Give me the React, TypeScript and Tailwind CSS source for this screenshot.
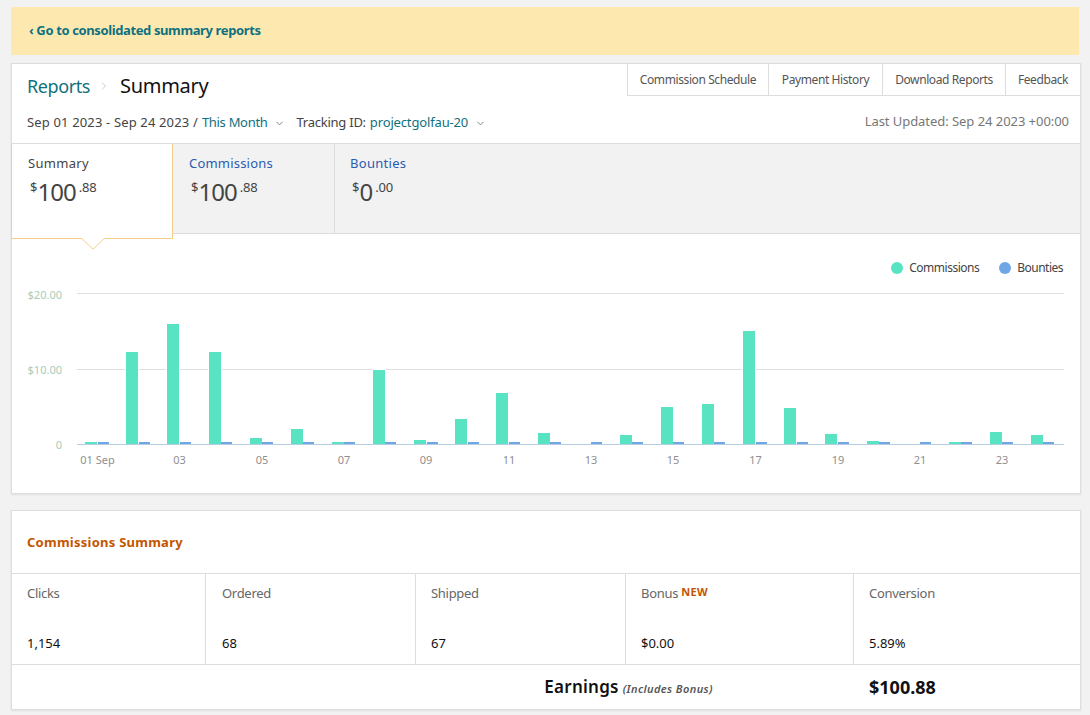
import { ChevronDown, ChevronRight } from 'lucide-react';

const commissionBars = [
  { x: 85, top: 442 },
  { x: 126, top: 352 },
  { x: 167, top: 324 },
  { x: 209, top: 352 },
  { x: 250, top: 438 },
  { x: 291, top: 429 },
  { x: 332, top: 442 },
  { x: 373, top: 370 },
  { x: 414, top: 440 },
  { x: 455, top: 419 },
  { x: 496, top: 393 },
  { x: 538, top: 433 },
  { x: 620, top: 435 },
  { x: 661, top: 407 },
  { x: 702, top: 404 },
  { x: 743, top: 331 },
  { x: 784, top: 408 },
  { x: 825, top: 434 },
  { x: 867, top: 441 },
  { x: 949, top: 442 },
  { x: 990, top: 432 },
  { x: 1031, top: 435 },
];

const bountyBars = [98, 139, 180, 221, 262, 303, 344, 385, 427, 468, 509, 550, 591, 632, 673, 714, 756, 797, 838, 879, 920, 961, 1002, 1043];

const xLabels = [
  { x: 97.5, label: '01 Sep' },
  { x: 179.5, label: '03' },
  { x: 262, label: '05' },
  { x: 344, label: '07' },
  { x: 426, label: '09' },
  { x: 509, label: '11' },
  { x: 591, label: '13' },
  { x: 673, label: '15' },
  { x: 755.5, label: '17' },
  { x: 838, label: '19' },
  { x: 920, label: '21' },
  { x: 1002, label: '23' },
];

function Money({ whole, cents }: { whole: string; cents: string }) {
  return (
    <div className="flex items-start text-[#444] leading-none ml-[2px] pt-[3px]">
      <span className="text-[13px] mt-[2px]">$</span>
      <span className="text-[24px] mt-[1px] tracking-[-1px]">{whole}</span>
      <span className="text-[13px] mt-[2px] ml-[3px] tracking-[-0.2px]">.{cents}</span>
    </div>
  );
}

function Chart() {
  return (
    <svg viewBox="12 285 1068 208" className="block w-[1068px] h-[208px]">
      <line x1="77" x2="1064" y1="293.5" y2="293.5" stroke="#dfdfdf" />
      <line x1="77" x2="1064" y1="369.5" y2="369.5" stroke="#dfdfdf" />
      <text x="62" y="299" textAnchor="end" fontSize="11" fill="#a8cdb8">$20.00</text>
      <text x="62" y="374" textAnchor="end" fontSize="11" fill="#a8cdb8">$10.00</text>
      <text x="62" y="449" textAnchor="end" fontSize="11" fill="#a8cdb8">0</text>
      {commissionBars.map((b) => (
        <g key={b.x}>
          <rect x={b.x - 1} y={b.top - 1} width="14" height={445 - b.top} fill="#fff" />
          <rect x={b.x} y={b.top} width="12" height={444 - b.top} fill="#58e4c2" />
        </g>
      ))}
      {bountyBars.map((x) => (
        <rect key={x} x={x} y="442" width="11" height="2" fill="#6fa6e6" />
      ))}
      <line x1="77" x2="1064" y1="444.5" y2="444.5" stroke="#b7cde3" />
      {xLabels.map((l) => (
        <text key={l.label} x={l.x} y="464" textAnchor="middle" fontSize="11" fill="#8f8f8f">{l.label}</text>
      ))}
    </svg>
  );
}

function StatCell({ label, value, width, last }: { label: React.ReactNode; value: string; width: string; last?: boolean }) {
  return (
    <div className={`${width} ${last ? '' : 'border-r border-[#ddd]'} pt-[10px] h-[90px] flex flex-col justify-between pb-[12px]`}>
      <div className="text-[13px] leading-[18px] text-[#666] tracking-[-0.3px]">{label}</div>
      <div className="text-[13px] leading-[18px] text-[#111]">{value}</div>
    </div>
  );
}

export default function App() {
  return (
    <div className="min-h-screen bg-[#f2f2f2] pt-[7px] px-[11px] font-['Noto_Sans',sans-serif]">
      <div className="h-[48px] bg-[#fde9b0] flex items-center pl-[18px] text-[13px] font-bold text-[#0f7180] tracking-[-0.38px]">
        ‹ Go to consolidated summary reports
      </div>

      <div className="mt-[8px] w-[1070px] h-[431px] bg-white border border-[#ddd] shadow-[0_1px_2px_rgba(0,0,0,0.08)]">
        <div className="h-[79px] relative">
          <div className="flex items-start justify-between">
            <div className="flex items-center pl-[15px] pt-[7px] leading-[30px]">
              <span className="text-[18px] text-[#0f7180] tracking-[-0.4px]">Reports</span>
              <ChevronRight className="w-[12px] h-[12px] text-[#ccc] ml-[8px] mr-[10px]" />
              <span className="text-[20px] text-[#111] tracking-[-0.3px]">Summary</span>
            </div>
            <div className="flex h-[32px] text-[12px] text-[#555] tracking-[-0.4px]">
              <div className="w-[141px] border-l border-b border-[#ddd] flex items-center justify-center">Commission Schedule</div>
              <div className="w-[114px] border-l border-b border-[#ddd] flex items-center justify-center">Payment History</div>
              <div className="w-[123px] border-l border-b border-[#ddd] flex items-center justify-center">Download Reports</div>
              <div className="w-[75px] border-l border-b border-[#ddd] flex items-center justify-center">Feedback</div>
            </div>
          </div>
          <div className="flex items-center justify-between pl-[15px] pr-[11px] mt-[11px] text-[13px] leading-[18px]">
            <div className="flex items-center text-[#444]">
              <span className="tracking-[0.15px]">Sep 01 2023 - Sep 24 2023 /</span>
              <span className="text-[#0f7180] ml-[4px] tracking-[-0.3px]">This Month</span>
              <ChevronDown className="w-[11px] h-[11px] text-[#777] ml-[6px] mt-[2px]" />
              <span className="ml-[12px] tracking-[-0.25px]">Tracking ID:</span>
              <span className="text-[#0f7180] ml-[4px] tracking-[-0.15px]">projectgolfau-20</span>
              <ChevronDown className="w-[11px] h-[11px] text-[#777] ml-[7px] mt-[2px]" />
            </div>
            <div className="text-[#777] tracking-[-0.05px] mb-[2px]">Last Updated: Sep 24 2023 +00:00</div>
          </div>
        </div>

        <div className="flex h-[91px] bg-[#f2f2f2] border-t border-b border-[#ddd]">
          <div className="relative z-10 w-[162px] h-[95px] bg-white border-r border-b border-l border-[#f7cf8d] -ml-px pl-[16px] pt-[9px]">
            <div className="text-[13px] leading-[20px] text-[#444] mb-[3px] tracking-[0.3px]">Summary</div>
            <Money whole="100" cents="88" />
            <svg viewBox="0 0 24 12" className="absolute left-[69px] top-[94px] w-[24px] h-[12px]">
              <path d="M0 0 L12 11 L24 0" fill="#fff" stroke="#f7cf8d" />
            </svg>
          </div>
          <div className="w-[162px] border-r border-[#ddd] pl-[16px] pt-[9px]">
            <div className="text-[13px] leading-[20px] text-[#2a5db0] mb-[3px] tracking-[0.2px]">Commissions</div>
            <Money whole="100" cents="88" />
          </div>
          <div className="pl-[15px] pt-[9px]">
            <div className="text-[13px] leading-[20px] text-[#2a5db0] mb-[3px] tracking-[0.3px]">Bounties</div>
            <Money whole="0" cents="00" />
          </div>
        </div>

        <div className="flex justify-end items-center gap-[20px] pt-[17px] pr-[17px] h-[51px] text-[12px] text-[#444] tracking-[-0.5px]">
          <div className="flex items-center gap-[6px]">
            <span className="w-[12px] h-[12px] rounded-full bg-[#58e4c2]" />
            Commissions
          </div>
          <div className="flex items-center gap-[6px]">
            <span className="w-[12px] h-[12px] rounded-full bg-[#6fa6e6]" />
            Bounties
          </div>
        </div>
        <Chart />
      </div>

      <div className="mt-[16px] w-[1070px] h-[200px] bg-white border border-[#ddd] shadow-[0_1px_2px_rgba(0,0,0,0.08)]">
        <div className="h-[63px] border-b border-[#ddd] flex items-center pl-[15px] pt-[2px] text-[13px] font-bold text-[#c45500] tracking-[0.25px]">
          Commissions Summary
        </div>
        <div className="flex border-b border-[#ddd]">
          <StatCell width="w-[194px] pl-[15px]" label="Clicks" value="1,154" />
          <StatCell width="w-[210px] pl-[16px]" label="Ordered" value="68" />
          <StatCell width="w-[210px] pl-[15px]" label="Shipped" value="67" />
          <StatCell
            width="w-[228px] pl-[15px]"
            label={
              <>
                Bonus <span className="relative -top-[2px] text-[11px] font-bold text-[#c45500] tracking-[0.4px]">NEW</span>
              </>
            }
            value="$0.00"
          />
          <StatCell last width="flex-1 pl-[15px]" label="Conversion" value="5.89%" />
        </div>
        <div className="h-[44px] flex items-center">
          <div className="w-[701px] text-right">
            <span className="text-[17px] font-semibold text-[#111] tracking-[0.25px]">Earnings</span>
            <span className="ml-[4px] text-[11px] font-semibold italic text-[#555] tracking-[0.4px]">(Includes Bonus)</span>
          </div>
          <div className="ml-[156px] text-[18px] font-bold text-[#111]">$100.88</div>
        </div>
      </div>
    </div>
  );
}
